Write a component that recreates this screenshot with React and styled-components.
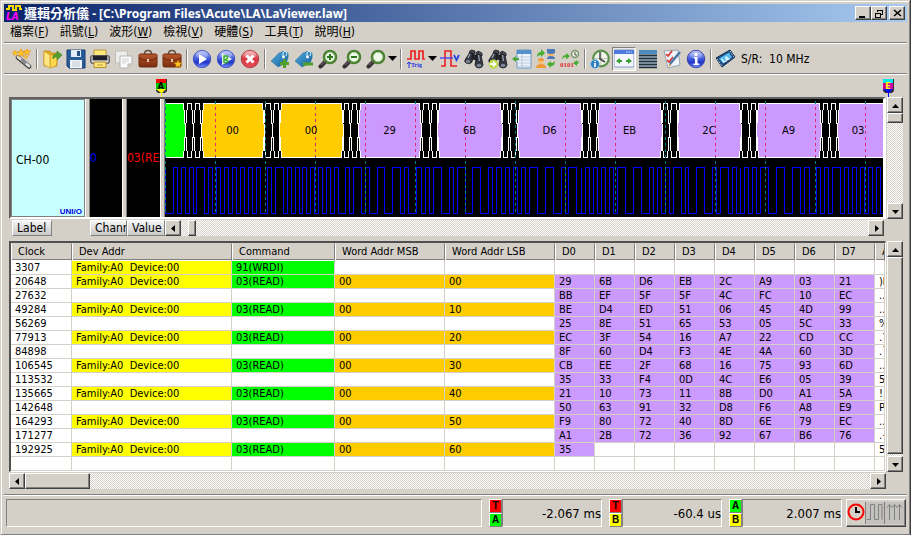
import React from "react";
import styled, { createGlobalStyle } from "styled-components";

const GlobalStyle = createGlobalStyle`
  * { box-sizing: border-box; }
  body {
    margin: 0;
    background: #d4d0c8;
    font-family: "DejaVu Sans Condensed", "Noto Sans CJK TC", sans-serif;
    font-size: 11px;
    color: #000;
  }
  button { font-family: inherit; color: inherit; padding: 0; margin: 0; }
`;

const Window = styled.div`
  min-height: 100vh;
  display: flex;
  flex-direction: column;
  padding: 4px;
  background: #d4d0c8;
  box-shadow: inset -1px -1px #404040, inset 1px 1px #d4d0c8,
    inset -2px -2px #808080, inset 2px 2px #fff;
`;

const TitleBar = styled.header`
  display: flex;
  align-items: center;
  height: 18px;
  padding: 0 2px 0 2px;
  background: linear-gradient(to right, #0a246a, #a6caf0);
`;

const Title = styled.h1`
  flex: 1;
  margin: 0 0 0 1px;
  color: #fff;
  font-family: "Noto Sans", "Noto Sans CJK TC", sans-serif;
  font-size: 12px;
  font-weight: bold;
  line-height: 18px;
  white-space: pre;
`;

const TitleCjk = styled.span`
  font-size: 13px;
`;

const raised = `
  border: 1px solid;
  border-color: #fff #404040 #404040 #fff;
  box-shadow: inset -1px -1px #808080;
  background: #d4d0c8;
`;

const CaptionButton = styled.button`
  ${raised}
  width: 16px;
  height: 14px;
  display: flex;
  align-items: center;
  justify-content: center;
  margin-left: ${(p) => (p.$gap ? "2px" : "0")};
`;

const MenuBar = styled.nav`
  display: flex;
  align-items: center;
  gap: 11px;
  height: 20px;
  padding: 0 6px;
`;

const MenuItem = styled.button`
  border: 0;
  background: none;
  font-size: 12px;
  line-height: 18px;
  white-space: nowrap;
`;

const Groove = styled.hr`
  width: 100%;
  height: 2px;
  margin: 0;
  border: 0;
  border-top: 1px solid #808080;
  border-bottom: 1px solid #fff;
`;

const Toolbar = styled.div`
  display: flex;
  align-items: center;
  height: 29px;
  padding: 0 6px;
`;

const ToolButton = styled.button`
  display: flex;
  align-items: center;
  justify-content: center;
  gap: 2px;
  width: ${(p) => (p.$wide ? "34px" : "24px")};
  height: 24px;
  flex: none;
  border: 1px solid;
  border-color: ${(p) => (p.$pressed ? "#808080 #fff #fff #808080" : "transparent")};
  background: ${(p) => (p.$pressed ? "#e9e7e3" : "none")};
`;

const ToolDivider = styled.span`
  width: 2px;
  height: 20px;
  margin: 0 2px;
  flex: none;
  border-left: 1px solid #808080;
  border-right: 1px solid #fff;
`;

const SampleRate = styled.span`
  margin-left: 3px;
  font-size: 12px;
  white-space: pre;
`;

const Markers = styled.div`
  display: flex;
  justify-content: space-between;
  align-items: flex-end;
  height: 22px;
  padding: 0 13px 0 152px;
`;

const Body = styled.main`
  flex: 1;
  display: flex;
  flex-direction: column;
  gap: 5px;
  padding: 0 4px 5px 5px;
`;

const Pane = styled.section`
  display: grid;
  grid-template-columns: minmax(0, 1fr) 16px;
  column-gap: 1px;
  row-gap: 1px;
`;

const WavePanel = styled.div`
  display: flex;
  height: 122px;
  background: #000;
  border-style: solid;
  border-width: 2px 3px 2px 2px;
  border-color: #606060 #fff #fff #606060;
`;

const ChannelCell = styled.div`
  display: flex;
  flex-direction: column;
  width: 74px;
  flex: none;
  padding: 0 2px 0 4px;
  background: #c8ffff;
  border: 1px solid #808080;
  font-size: 12px;
`;

const ChannelName = styled.span`
  flex: 1;
  display: flex;
  align-items: center;
`;

const Protocol = styled.span`
  align-self: flex-end;
  margin-top: -12px;
  color: #0000e0;
  font-family: "Liberation Sans", sans-serif;
  font-size: 8px;
  font-weight: bold;
  line-height: 8px;
`;

const Splitter = styled.div`
  width: 5px;
  flex: none;
  background: #d4d0c8;
  border-left: 1px solid #fff;
  border-right: 1px solid #808080;
`;

const ValueCell = styled.div`
  display: flex;
  align-items: center;
  width: ${(p) => p.$width};
  flex: none;
  overflow: hidden;
  color: ${(p) => p.$color};
  font-size: 12px;
  white-space: nowrap;
`;

const WaveArea = styled.svg`
  flex: 1;
  min-width: 0;
  height: 118px;
  font-size: 10px;
  font-family: "DejaVu Sans", sans-serif;
`;

const WaveFooter = styled.div`
  display: flex;
  height: 16px;
  padding: 0 2px 0 3px;
`;

const FooterButton = styled.button`
  width: ${(p) => p.$width};
  margin-right: ${(p) => p.$after || "0"};
  padding-left: 4px;
  flex: none;
  overflow: hidden;
  text-align: left;
  font-size: 12px;
  line-height: 13px;
  white-space: nowrap;
  background: linear-gradient(#f4f4f4, #c8c8c8);
  border: 1px solid;
  border-color: #fff #808080 #808080 #fff;
`;

const Track = styled.div`
  display: flex;
  flex-direction: ${(p) => (p.$vertical ? "column" : "row")};
  flex: 1;
  min-width: 0;
  background: repeating-conic-gradient(#fff 0% 25%, #d4d0c8 0% 50%) 0 0 / 2px 2px;
`;

const ArrowButton = styled.button`
  ${raised}
  width: 16px;
  height: 16px;
  flex: none;
  display: flex;
  align-items: center;
  justify-content: center;
`;

const Rail = styled.div`
  flex: 1;
  display: flex;
  flex-direction: ${(p) => (p.$vertical ? "column" : "row")};
  padding: ${(p) => p.$inset || "0"};
`;

const Thumb = styled.div`
  ${raised}
  width: ${(p) => p.$width || "100%"};
  height: ${(p) => p.$height || "100%"};
`;

const TablePanel = styled.div`
  overflow: hidden;
  border-style: solid;
  border-width: 2px 1px 1px 2px;
  border-color: #505050 #fff #fff #505050;
  background: #fff;
`;

const DataTable = styled.table`
  width: 100%;
  table-layout: fixed;
  border-collapse: separate;
  border-spacing: 0;
`;

const HeadCell = styled.th`
  height: 18px;
  padding: 0 0 0 6px;
  overflow: hidden;
  text-align: left;
  font-weight: normal;
  line-height: 14px;
  white-space: nowrap;
  background: #d4d0c8;
  border: 1px solid;
  border-color: #d4d0c8 #808080 #fff #fff;
  box-shadow: inset 0 -1px #808080;
`;

const Cell = styled.td`
  height: 14px;
  padding: 1px 0 0 4px;
  overflow: hidden;
  line-height: 12px;
  white-space: pre;
  background: ${(p) => p.$fill || "#fff"};
  border-right: 1px solid #d4d0c8;
  border-bottom: 1px solid #d4d0c8;
`;

const StatusBar = styled.footer`
  display: flex;
  height: 36px;
  gap: 7px;
  padding: 3px 1px 5px 2px;
`;

const Sunken = styled.div`
  flex: ${(p) => (p.$grow ? "1" : "none")};
  width: ${(p) => p.$width || "auto"};
  border: 1px solid;
  border-color: #808080 #fff #fff #808080;
  text-align: right;
  font-size: 13px;
  line-height: 27px;
  white-space: nowrap;
`;

const Measure = styled.div`
  display: flex;
  flex: none;
`;

const LampStack = styled.div`
  display: flex;
  flex-direction: column;
  width: 13px;
`;

const Lamp = styled.span`
  flex: 1;
  font-family: "Liberation Sans", sans-serif;
  font-size: 10px;
  font-weight: bold;
  line-height: 11px;
  text-align: center;
  background: ${(p) => p.$color};
  border: 1px solid;
  border-color: #fff #808080 #808080 #fff;
`;

const ModeGroup = styled.div`
  ${raised}
  display: flex;
  align-items: center;
  width: 60px;
  margin-left: -3px;
  flex: none;
`;

const ModeButton = styled.button`
  width: 19px;
  height: 22px;
  border: 0;
  border-right: ${(p) => (p.$last ? "0" : "1px solid #808080")};
  background: ${(p) => (p.$active ? "none" : "#c4c2be")};
`;

const Icon = ({ children }) => (
  <svg width="20" height="20" viewBox="0 0 20 20" aria-hidden="true">{children}</svg>
);

const Caret = () => (
  <svg width="9" height="5" aria-hidden="true"><path d="M0 0h9L4.500 5z" /></svg>
);

const Gradients = () => (
  <svg width="0" height="0" display="block" aria-hidden="true">
    <defs>
      <linearGradient id="blueBall" x2="0" y2="1">
        <stop offset="0" stopColor="#b9c4ff" />
        <stop offset=".5" stopColor="#4058dc" />
        <stop offset=".7" stopColor="#2436c8" />
        <stop offset="1" stopColor="#7a94ff" />
      </linearGradient>
      <linearGradient id="redBall" x2="0" y2="1">
        <stop offset="0" stopColor="#f7b0b0" />
        <stop offset=".5" stopColor="#d93840" />
        <stop offset="1" stopColor="#e8505c" />
      </linearGradient>
      <linearGradient id="leather" x2="0" y2="1">
        <stop offset="0" stopColor="#b8582c" />
        <stop offset="1" stopColor="#7c2c10" />
      </linearGradient>
      <linearGradient id="tagBlue" x2="1" y2="1">
        <stop offset="0" stopColor="#50b0e0" />
        <stop offset="1" stopColor="#145c98" />
      </linearGradient>
    </defs>
  </svg>
);

const STAR = "M0-4L1.1-1.3 4-1.1 1.8.8 2.5 3.6 0 2-2.5 3.6-1.8.8-4-1.1-1.1-1.3z";

const Wand = () => (
  <Icon>
    <path d="M6 8.500L17 17.500" stroke="#444" strokeWidth="4.600" strokeLinecap="round" />
    <path d="M6 8L17 17" stroke="#e4e4e4" strokeWidth="2.800" strokeLinecap="round" />
    <path d="M9 10.500L14 14.500" stroke="#8a8a8a" strokeWidth="2.800" />
    {[[3, 4, 0.7], [9, 4, 1], [15, 3, 0.9], [14, 8, 0.5]].map(([x, y, s]) => (
      <path key={x} d={STAR} transform={`translate(${x} ${y}) scale(${s})`} fill="#ffc830" stroke="#e88c00" strokeWidth=".7" />
    ))}
  </Icon>
);

const Folder = () => (
  <Icon>
    <path d="M2 2h6l1 2h6v13H2z" fill="#e4ac20" stroke="#b88410" strokeWidth=".7" />
    <path d="M8 6h8l-2 11-6 2z" fill="#ffd850" stroke="#c89420" strokeWidth=".7" />
    <path d="M2 2l6 4v13l-6-3z" fill="#ffe680" stroke="#c89420" strokeWidth=".7" />
    <path d="M11 10q-1-5 4-5V2l5 4-5 5V8q-2-1-4 2z" fill="#55a030" stroke="#347818" strokeWidth=".6" />
  </Icon>
);

const Floppy = () => (
  <Icon>
    <path d="M1 1h18v18H3l-2-2z" fill="#285c98" stroke="#163c70" />
    <path d="M5 1h10v7H5z" fill="#e4eef8" />
    <path d="M11 2h3v5h-3z" fill="#285080" />
    <path d="M4 11h12v8H4z" fill="#f0f4f8" />
    <path d="M6 13h8M6 15h8M6 17h8" stroke="#b4c0cc" strokeWidth=".8" />
  </Icon>
);

const Printer = () => (
  <Icon>
    <path d="M4 1h12v6H4z" fill="#ffe878" stroke="#b89838" />
    <rect x=".5" y="6.500" width="19" height="8" rx="2" fill="#a0a0a8" stroke="#54545c" />
    <path d="M3 7h14v4H3z" fill="#202028" />
    <path d="M2 12.500h16" stroke="#dcdce0" />
    <path d="M4 13h12v5.500H4z" fill="#ffe878" stroke="#b09030" />
    <path d="M7 16h6" stroke="#c09830" />
  </Icon>
);

const Copies = () => (
  <Icon>
    <path d="M1.500 2h12v12h-12z" fill="#ececea" stroke="#bcbcb8" />
    <path d="M6 7h12v8l-4 4H6z" fill="#fafafa" stroke="#b4b4b4" />
    <path d="M14 19v-4h4" fill="#d4d4d4" stroke="#b4b4b4" />
    <path d="M8 10h7M8 12h7M8 14h4" stroke="#ccd0d4" />
  </Icon>
);

const Case = ({ star }) => (
  <Icon>
    <path d="M6.500 5q0-3.500 3.500-3.500T13.500 5" fill="none" stroke="#685040" strokeWidth="1.500" />
    <rect x="1" y="5" width="18" height="13" rx="1.500" fill="url(#leather)" stroke="#70280c" />
    <path d="M1 9q9 5 18 0" fill="none" stroke="#6c260c" />
    <path d="M9 10h2v3H9z" fill="#e0c8a8" />
    {star && <path d={STAR} transform="translate(16 15)" fill="#ffc820" stroke="#c88000" strokeWidth=".6" />}
  </Icon>
);

const Ball = ({ fill, edge, children }) => (
  <Icon>
    <circle cx="10" cy="10" r="8.700" fill={fill} stroke={edge} strokeWidth=".8" />
    <ellipse cx="10" cy="6" rx="6" ry="3.500" fill="#fff" opacity=".25" />
    {children}
  </Icon>
);

const Tag = ({ plus }) => (
  <Icon>
    <path d="M1 12L9 4q6-3 9 0 1 5-2 10l-8 4z" fill="url(#tagBlue)" stroke="#3478a0" strokeWidth=".6" />
    <path d="M13 8q-1-5 2-6 3 1 1 5" fill="none" stroke="#ddeeff" />
    <circle cx="13.500" cy="8" r="1.400" fill="#fff" />
    <path d={plus ? "M10 14.500h9M14.500 10v9" : "M9 15h10"} stroke="#50a028" strokeWidth="3" />
  </Icon>
);

const Lens = ({ sign }) => (
  <Icon>
    <path d="M2.500 17.500L8 12" stroke="#392e34" strokeWidth="4" strokeLinecap="round" />
    <path d="M3 16L7 12.500" stroke="#8b6b70" />
    <circle cx="12" cy="8" r="6" fill="#f0f8ec" stroke="#498130" strokeWidth="2.500" />
    <circle cx="12" cy="8" r="4.800" fill="none" stroke="#a5c894" strokeWidth=".7" />
    {sign && <path d={sign} stroke="#2c761c" strokeWidth="2" />}
  </Icon>
);

const Trigger = () => (
  <Icon>
    <path d="M1 10h4V2h4v8h4V2h4v8h2" fill="none" stroke="#ee2020" strokeWidth="1.700" />
    <path d="M3 19v-6m-2 2l2-2 2 2" fill="none" stroke="#2030e0" />
    <text x="5" y="18" fontSize="6" fontWeight="bold" fill="#2030e0" fontFamily="Liberation Serif">Trig</text>
  </Icon>
);

const Pulse = () => (
  <Icon>
    <path d="M1 17h4V2h6v15h6" fill="none" stroke="#ee2020" strokeWidth="1.600" />
    <path d="M0 9h13" stroke="#5048e8" strokeWidth="1.500" />
    <path d="M14 6l2.500 5L19 6" fill="none" stroke="#2040e0" strokeWidth="1.700" />
  </Icon>
);

const Binoculars = ({ next }) => (
  <Icon>
    <g stroke="#16181c" strokeWidth=".8">
      <path d="M6 3l4 1-2 9q-2 3-6 1-2-1-1-3z" fill="#33373f" />
      <path d="M13 4l4 2 2 10q-1 3-4 3t-4-3z" fill="#33373f" />
      <path d="M8 6l5 0v5l-5-1z" fill="#22252b" />
      <path d="M5 3l2-2 4 1v3zM12 4l2-2 4 2v3z" fill="#484e58" />
    </g>
    <ellipse cx="4" cy="12.500" rx="2.200" ry="1.800" fill="#7a8492" />
    <ellipse cx="15" cy="16.500" rx="2.500" ry="1.800" fill="#7a8492" />
    <path d="M6 5L4 9M14.500 6l1 6" stroke="#98a2b0" strokeWidth="1.300" />
    {next && (
      <>
        <circle cx="5.500" cy="15" r="4.600" fill="#b8d83c" />
        <path d="M2 14h3v-2.500L9 15l-4 3.500V16H2z" fill="#fff" />
      </>
    )}
  </Icon>
);

const ListIcon = () => (
  <Icon>
    <path d="M5 1h14v18H5z" fill="#eef4fa" stroke="#6f96bc" />
    <path d="M5 1h14v4H5z" fill="#5592cc" />
    <path d="M5 8h14M5 11h14M5 14h14M5 17h14M10 5v14" stroke="#a8c0d8" strokeWidth=".8" />
    <path d="M0 10l4-3v2h3v2H4v2z" fill="#48a838" />
  </Icon>
);

const UserSwap = () => (
  <Icon>
    <circle cx="15" cy="5" r="3" fill="#f2b46c" />
    <path d="M11 0h8v4q-4 2-8 0zM11 10q0-3 4-3t4 3z" fill="#4a78b8" />
    <circle cx="5" cy="13" r="2.700" fill="#f5c080" />
    <path d="M0 19q0-4 5-4t5 4zM2 12q0-3 3-3t3 3z" fill="#f09838" />
    <path d="M1 8q0-5 4-5V0l4 4-4 4V6Q2 6 1 8z" fill="#47ad30" />
    <path d="M19 12q0 5-4 5v2l-4-4 4-3v2q3 0 4-2z" fill="#47ad30" />
  </Icon>
);

const BitSwap = () => (
  <Icon>
    <circle cx="15" cy="5" r="3.500" fill="#e8eee0" stroke="#7b9670" strokeWidth="1.500" />
    <path d="M15 3v3h2" fill="none" stroke="#555" />
    <path d="M2 11q0-5 4-5V4l4 3-4 3.500V8Q3 8 2 11z" fill="#47ad30" />
    <path d="M19 11q0 4-2 4v2l-4-3 4-3v2q1 0 2-2z" fill="#47ad30" />
    <text x="0" y="18" fontSize="7" fontWeight="bold" fill="#e03030" fontFamily="Liberation Serif">0101</text>
  </Icon>
);

const ClockInfo = () => (
  <Icon>
    <circle cx="11" cy="9.500" r="7.800" fill="#f0f4ea" stroke="#5a9048" strokeWidth="2.200" />
    <path d="M11 2v15M3.500 9.500h15" stroke="#9aa894" strokeWidth=".6" />
    <path d="M10 3v7l5 3" fill="none" stroke="#444" strokeWidth="1.500" />
    <circle cx="5" cy="15" r="4.500" fill="#2d7dc2" stroke="#b8d8f4" strokeWidth=".7" />
    <path d="M5 12v1M5 14v4" stroke="#fff" strokeWidth="1.700" />
  </Icon>
);

const FitWindow = () => (
  <Icon>
    <rect x="0" y="1" width="20" height="17" rx="1" fill="#f4f6fc" stroke="#8098d0" />
    <path d="M0 1h20v4H0z" fill="#4f78dc" />
    <path d="M12 3h6" stroke="#dce6ff" strokeDasharray="1.500 1" />
    <path d="M2 12l4-3v2h2v2H6v2zM18 12l-4-3v2h-2v2h2v2z" fill="#36a030" />
  </Icon>
);

const Rows = () => (
  <Icon>
    <path d="M1 1h18v18H1z" fill="#95a7b8" />
    <path d="M1 1h18v4H1z" fill="#4d8cbc" />
    <path d="M1 6.500h18M1 9.500h18M1 12.500h18M1 15.500h18M1 18.500h18" stroke="#222e38" strokeWidth="1.500" />
  </Icon>
);

const Checklist = () => (
  <Icon>
    <path d="M2 2l14-1 2 15-12 3z" fill="#f0f4f7" stroke="#93a3b0" />
    <path d="M4 5l2 2 4-5M5 11l2 2 4-5" fill="none" stroke="#d93434" strokeWidth="1.700" />
    <path d="M8 15L18 3" stroke="#4c78a4" strokeWidth="2.500" />
    <path d="M8 15l-1 2 2-1" stroke="#e0a050" />
  </Icon>
);

const Ticket = () => (
  <Icon>
    <path d="M0 9L14 1l5 7-13 10z" fill="#1f4a80" stroke="#18304c" />
    <path d="M3 9.500l10-6 3 5-9 6z" fill="#55b9f0" />
    <path d="M1 10L6 17M14 2l4 6" stroke="#dcebf4" strokeDasharray="1 1" />
    <text x="5" y="13" fontSize="6" fontWeight="bold" fill="#fff" transform="rotate(-30 8 10)">LA</text>
  </Icon>
);

const TOOLS = [
  ["精靈", <Wand />], null,
  ["開啟", <Folder />], ["儲存", <Floppy />], ["列印", <Printer />], ["複製", <Copies />],
  ["工作區", <Case />], ["新增工作區", <Case star />], null,
  ["執行", <Ball fill="url(#blueBall)" edge="#3148b4"><path d="M7 5l8 5-8 5z" fill="#fff" /></Ball>],
  ["重複執行", (
    <Ball fill="url(#blueBall)" edge="#3148b4">
      <path d="M6 4l10 6-10 6z" fill="#e6f8e6" />
      <path d="M8 14V7h3q2 2-2 4 4 0 3 2l-3 1" fill="none" stroke="#35a82c" strokeWidth="1.500" />
    </Ball>
  )],
  ["停止", <Ball fill="url(#redBall)" edge="#a82832"><path d="M6.500 6.500l7 7m0-7l-7 7" stroke="#fff" strokeWidth="3" /></Ball>], null,
  ["新增標籤", <Tag plus />], ["移除標籤", <Tag />],
  ["放大", <Lens sign="M9 8h6M12 5v6" />], ["縮小", <Lens sign="M9 8h6" />],
  ["縮放", <Lens />, "wide"], null,
  ["觸發", <Trigger />, "wide"], ["脈波", <Pulse />],
  ["尋找", <Binoculars />], ["找下一個", <Binoculars next />],
  ["清單", <ListIcon />], ["交換", <UserSwap />], ["位元", <BitSwap />], null,
  ["時間", <ClockInfo />], ["符合視窗", <FitWindow />, "pressed"], ["列", <Rows />], ["選項", <Checklist />],
  ["資訊", (
    <Ball fill="url(#blueBall)" edge="#26329c">
      <circle cx="10" cy="5.500" r="1.700" fill="#fff" />
      <path d="M8 8h3.500v6.500H13V16H7.500v-1.500H9v-5H8z" fill="#fff" />
    </Ball>
  )], null,
  ["取樣率", <Ticket />],
];

const MENUS = [["檔案", "F"], ["訊號", "L"], ["波形", "W"], ["檢視", "V"], ["硬體", "S"], ["工具", "T"], ["說明", "H"]];

const GREEN = "#00ff00";
const ORANGE = "#ffcc00";
const PURPLE = "#cc99ff";
const YELLOW = "#ffff00";

// x positions are pixels from the left edge of the wave area
const FRAMES = [
  [-40, 18, GREEN, ""], [38, 97, ORANGE, "00"], [116, 176, ORANGE, "00"],
  [195, 254, PURPLE, "29"], [274, 335, PURPLE, "6B"], [354, 415, PURPLE, "D6"],
  [434, 495, PURPLE, "EB"], [514, 574, PURPLE, "2C"], [593, 654, PURPLE, "A9"],
  [674, 734, PURPLE, "03", 693],
];

const ACKS = [
  [22, 26], [30, 34], [100, 105], [109, 113], [179, 183], [187, 191], [258, 263], [267, 271],
  [338, 342], [346, 350], [418, 422], [426, 430], [498, 502], [506, 511], [577, 582], [586, 590],
  [658, 662], [666, 670],
];

const EDGES = [
  8, 12, 16, 20, 24, 28, 31, 39, 43, 47, 51, 55, 59, 63, 67, 71, 75, 79, 83, 87, 91, 95, 102, 106,
  110, 118, 122, 126, 130, 134, 137, 141, 145, 149, 153, 157, 161, 165, 169, 173, 180, 184, 188, 196,
  200, 204, 212, 219, 227, 235, 239, 243, 251, 256, 260, 264, 268, 276, 284, 288, 292, 300, 307, 315,
  323, 327, 331, 336, 340, 344, 348, 352, 356, 360, 364, 372, 380, 388, 396, 400, 403, 411, 416, 416,
  420, 424, 428, 432, 436, 440, 444, 448, 452, 460, 468, 476, 484, 488, 492, 496, 500, 504, 508, 516,
  520, 523, 531, 539, 547, 551, 555, 563, 567, 571, 575, 575, 579, 583, 587, 591, 595, 603, 611, 619,
  627, 635, 639, 644, 651, 655, 659, 663, 667, 675, 679, 683, 687, 691, 695, 699, 703, 707, 711, 715,
];

const hexagon = (l, r) => `M${l} 4.500H${r}L${r + 2} 31.500L${r} 58.500H${l}L${l - 2} 31.500Z`;

const signalPath = () => {
  let d = "M.5 69V114.500";
  EDGES.forEach((x, i) => {
    d += `H${x + 0.5}V${i % 2 ? 114.5 : 68.5}`;
  });
  return d + "H900";
};

const gridLines = Array.from({ length: 30 }, (_, i) => i * 50 + 0.5);

const Waveform = () => (
  <WaveArea role="img" aria-label="CH-00">
    <defs>
      <clipPath id="inFrames">
        {FRAMES.map(([l, r]) => <rect key={l} x={l} y="5" width={r - l} height="53" />)}
      </clipPath>
    </defs>
    <g shapeRendering="crispEdges">
      {ACKS.map(([l, r]) => <path key={l} d={hexagon(l + 0.5, r + 0.5)} fill="none" stroke="#fff" />)}
      {FRAMES.map(([l, r, fill]) => <path key={l} d={hexagon(l + 0.5, r + 0.5)} fill={fill} stroke="#fff" />)}
      <path d={signalPath()} fill="none" stroke="#0000ff" />
      {gridLines.map((x) => <path key={x} d={`M${x} 2V114`} stroke="#008080" strokeDasharray="3 3" />)}
      <g clipPath="url(#inFrames)">
        {gridLines.slice(1).map((x) => <path key={x} d={`M${x} 2V114`} stroke="#e02878" strokeDasharray="3 3" />)}
      </g>
    </g>
    {FRAMES.filter((f) => f[3]).map(([l, r, , label, at]) => (
      <text key={l} x={at || (l + r) / 2} y="35" textAnchor="middle">{label}</text>
    ))}
  </WaveArea>
);

const COLUMNS = [
  ["Clock", 61], ["Dev Addr", 160], ["Command", 103], ["Word Addr MSB", 110], ["Word Addr LSB", 110],
  ["D0", 40], ["D1", 40], ["D2", 40], ["D3", 40], ["D4", 40], ["D5", 40], ["D6", 40], ["D7", 40], ["ASCII", null],
];

// clock, command, word address LSB, data bytes
const RECORDS = [
  ["3307", "91(WRDI)", "", ""],
  ["20648", "03(READ)", "00", "29 6B D6 EB 2C A9 03 21"],
  ["27632", "", "", "BB EF 5F 5F 4C FC 10 EC"],
  ["49284", "03(READ)", "10", "BE D4 ED 51 06 45 4D 99"],
  ["56269", "", "", "25 8E 51 65 53 05 5C 33"],
  ["77913", "03(READ)", "20", "EC 3F 54 16 A7 22 CD CC"],
  ["84898", "", "", "8F 60 D4 F3 4E 4A 60 3D"],
  ["106545", "03(READ)", "30", "CB EE 2F 68 16 75 93 6D"],
  ["113532", "", "", "35 33 F4 0D 4C E6 05 39"],
  ["135665", "03(READ)", "40", "21 10 73 11 8B D0 A1 5A"],
  ["142648", "", "", "50 63 91 32 D8 F6 A8 E9"],
  ["164293", "03(READ)", "50", "F9 80 72 40 8D 6E 79 EC"],
  ["171277", "", "", "A1 2B 72 36 92 67 B6 76"],
  ["192925", "03(READ)", "60", "35"],
  ["", "", "", ""],
];

const toAscii = (bytes) =>
  bytes.map((b) => {
    const code = parseInt(b, 16);
    return code > 31 && code < 127 ? String.fromCharCode(code) : ".";
  }).join("");

const Record = ({ record }) => {
  const [clock, command, lsb, data] = record;
  const bytes = data ? data.split(" ") : [];
  return (
    <tr>
      <Cell>{clock}</Cell>
      <Cell $fill={command && YELLOW}>{command && "Family:A0  Device:00"}</Cell>
      <Cell $fill={command && GREEN}>{command}</Cell>
      <Cell $fill={lsb && ORANGE}>{lsb && "00"}</Cell>
      <Cell $fill={lsb && ORANGE}>{lsb}</Cell>
      {Array.from({ length: 8 }, (_, i) => (
        <Cell key={i} $fill={bytes[i] && PURPLE}>{bytes[i]}</Cell>
      ))}
      <Cell>{toAscii(bytes)}</Cell>
    </tr>
  );
};

const ARROWS = {
  up: "M0 6h7L3.500 2z",
  down: "M0 2h7L3.500 6z",
  left: "M5 0v7L1 3.500z",
  right: "M2 0v7l4-3.500z",
};

const Arrow = ({ dir }) => (
  <ArrowButton aria-label={dir}>
    <svg width="7" height="7"><path d={ARROWS[dir]} /></svg>
  </ArrowButton>
);

const Scroller = ({ vertical, inset, size }) => (
  <Track $vertical={vertical}>
    <Arrow dir={vertical ? "up" : "left"} />
    <Rail $vertical={vertical} $inset={inset}>
      <Thumb $width={vertical ? "100%" : size} $height={vertical ? size : "100%"} />
    </Rail>
    <Arrow dir={vertical ? "down" : "right"} />
  </Track>
);

const Marker = ({ letter, top, bottom, point, ink }) => (
  <svg width="11" height="18" aria-label={`Marker ${letter}`}>
    <path d="M0 0h11v12l-2 2H2l-2-2z" fill="#333" />
    <path d="M0 0h10v4H0z" fill={top} />
    <path d="M0 4h10v7H0z" fill={bottom} />
    <path d="M0 10h10l-4 4v4H5v-4z" fill={point} />
    <text x="5" y="10" textAnchor="middle" fontSize="9" fontWeight="bold" fill={ink}>{letter}</text>
  </svg>
);

const MEASURES = [
  [["T", "#ff0000"], ["A", GREEN], "-2.067 ms"],
  [["T", "#ff0000"], ["B", YELLOW], "-60.4 us"],
  [["A", GREEN], ["B", YELLOW], "2.007 ms"],
];

const App = () => {
  return (
    <Window>
      <GlobalStyle />
      <Gradients />
      <TitleBar>
        <svg width="17" height="16" aria-hidden="true">
          <path d="M0 4h3V1h4v4h3V1h4v3h2" fill="none" stroke="#ffdc00" strokeWidth="2" />
          <text x="0" y="15" fontSize="10" fontWeight="bold" fontStyle="italic" fill="#ff00ff">LA</text>
        </svg>
        <Title><TitleCjk>邏輯分析儀</TitleCjk> - [C:\Program Files\Acute\LA\LaViewer.law]</Title>
        <CaptionButton aria-label="Minimize">
          <svg width="10" height="9"><path d="M1 7h6v2H1z" /></svg>
        </CaptionButton>
        <CaptionButton aria-label="Restore">
          <svg width="10" height="9" fill="none" stroke="#000" shapeRendering="crispEdges">
            <path d="M3.500 3V1.500h5v4H7M3 1h6M1.500 4.500h5v4h-5zM1 4h6" />
          </svg>
        </CaptionButton>
        <CaptionButton aria-label="Close" $gap>
          <svg width="9" height="8"><path d="M1 1l7 6M8 1L1 7" stroke="#000" strokeWidth="1.600" /></svg>
        </CaptionButton>
      </TitleBar>
      <MenuBar>
        {MENUS.map(([name, key]) => <MenuItem key={key}>{name}(<u>{key}</u>)</MenuItem>)}
      </MenuBar>
      <Groove />
      <Toolbar>
        {TOOLS.map((tool, i) => tool ? (
          <ToolButton key={i} aria-label={tool[0]} $wide={tool[2] === "wide"} $pressed={tool[2] === "pressed"}>
            {tool[1]}
            {tool[2] === "wide" && <Caret />}
          </ToolButton>
        ) : <ToolDivider key={i} />)}
        <SampleRate>S/R:  10 MHz</SampleRate>
      </Toolbar>
      <Groove />
      <Markers>
        <Marker letter="A" top="#ff0000" bottom="#00c800" point="#ffff00" ink="#000" />
        <Marker letter="E" top="#00e8e8" bottom="#d000a0" point="#0000ff" ink="#ffff00" />
      </Markers>
      <Body>
        <Pane>
          <WavePanel>
            <ChannelCell>
              <ChannelName>CH-00</ChannelName>
              <Protocol>UNI/O</Protocol>
            </ChannelCell>
            <Splitter />
            <ValueCell $width="32px" $color="#0000ff">0</ValueCell>
            <Splitter />
            <ValueCell $width="33px" $color="#ff0000">03(READ)</ValueCell>
            <Splitter />
            <Waveform />
          </WavePanel>
          <Scroller vertical size="10px" />
          <WaveFooter>
            <FooterButton $width="40px" $after="38px">Label</FooterButton>
            <FooterButton $width="37px">Channel</FooterButton>
            <FooterButton $width="38px">Value</FooterButton>
            <Scroller size="8px" inset="0 0 0 7px" />
          </WaveFooter>
        </Pane>
        <Pane>
          <TablePanel>
            <DataTable>
              <colgroup>
                {COLUMNS.map(([name, width]) => <col key={name} width={width || undefined} />)}
              </colgroup>
              <thead>
                <tr>{COLUMNS.map(([name]) => <HeadCell key={name} scope="col">{name}</HeadCell>)}</tr>
              </thead>
              <tbody>
                {RECORDS.map((r) => <Record key={r[0]} record={r} />)}
              </tbody>
            </DataTable>
          </TablePanel>
          <Scroller vertical size="99%" />
          <Scroller size="65px" />
        </Pane>
      </Body>
      <Groove />
      <StatusBar>
        <Sunken $grow />
        {MEASURES.map(([first, second, value]) => (
          <Measure key={value}>
            <LampStack>
              <Lamp $color={first[1]}>{first[0]}</Lamp>
              <Lamp $color={second[1]}>{second[0]}</Lamp>
            </LampStack>
            <Sunken $width="100px">{value}</Sunken>
          </Measure>
        ))}
        <ModeGroup>
          <ModeButton aria-label="Clock" $active>
            <svg width="18" height="18">
              <circle cx="9" cy="9" r="7.500" fill="none" stroke="#ff0000" strokeWidth="2" />
              <path d="M9 4v5h4" fill="none" stroke="#000" strokeWidth="2" />
            </svg>
          </ModeButton>
          <ModeButton aria-label="Pulse">
            <svg width="16" height="18"><path d="M0 16.500h3.500v-15h4v15h4v-15H15v15" fill="none" stroke="#808080" /></svg>
          </ModeButton>
          <ModeButton aria-label="Edges" $last>
            <svg width="18" height="18">
              <path d="M3.500 17V2M8.500 17V2M13.500 17V2M1 4.500l2.500-3L6 4.500l2.500-3 2.500 3 2.500-3 2.500 3" fill="none" stroke="#808080" />
            </svg>
          </ModeButton>
        </ModeGroup>
      </StatusBar>
    </Window>
  );
};

export default App;
